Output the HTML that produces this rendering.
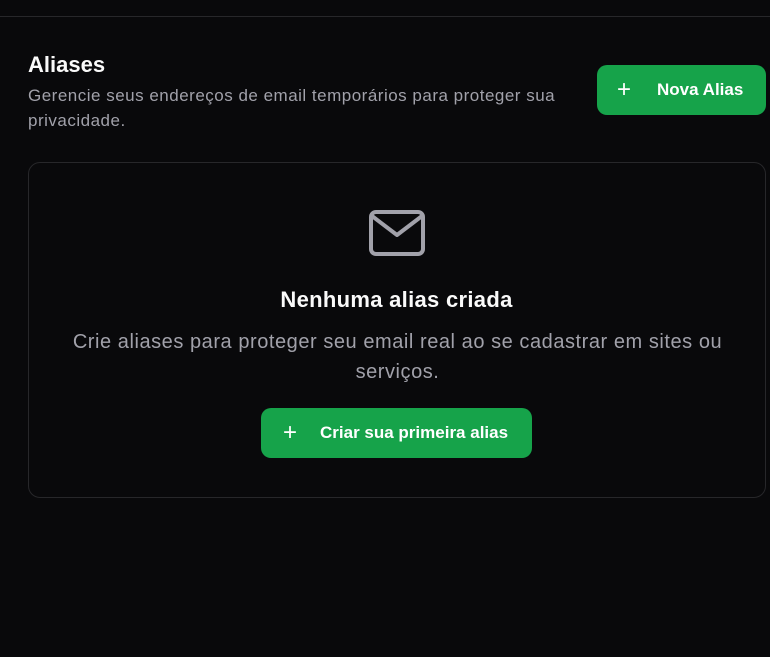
<!DOCTYPE html>
<html><head><style>
body{margin:0;width:770px;height:657px;background:#09090b;font-family:"Liberation Sans",sans-serif;overflow:hidden;position:relative;color:#fafafa}
.line{position:absolute;left:0;top:16px;width:770px;height:1px;background:#27272a}
h1{position:absolute;left:28px;top:52px;margin:0;font-size:22px;font-weight:bold}
.sub{position:absolute;left:28px;top:83px;width:560px;font-size:17px;letter-spacing:0.5px;line-height:25px;color:#a1a1aa}
.btn{position:absolute;background:#16a34a;color:#fff;border-radius:10px;font-weight:bold;font-size:17px;display:flex;align-items:center;box-sizing:border-box}
.btn span.p{font-weight:normal;font-size:24px;line-height:1;display:inline-block}
.card{position:absolute;left:28px;top:162px;width:738px;height:336px;border:1px solid #27272a;border-radius:12px;box-sizing:border-box}
h2{position:absolute;left:0;width:793px;top:287px;margin:0;text-align:center;font-size:22px;font-weight:bold;letter-spacing:0.3px}
.desc{position:absolute;left:60px;width:675px;top:327px;text-align:center;font-size:20px;letter-spacing:0.55px;line-height:30px;color:#a1a1aa}
</style></head><body>
<div class="line"></div>
<h1>Aliases</h1>
<div class="sub">Gerencie seus endereços de email temporários para proteger sua privacidade.</div>
<div class="btn" style="left:597px;top:65px;width:169px;height:50px;padding-left:20px"><span class="p" style="width:40px">+</span>Nova Alias</div>
<div class="card"></div>
<svg style="position:absolute;left:369px;top:210px" width="56" height="46" viewBox="0 0 56 46"><rect x="2" y="2" width="52" height="42" rx="5" fill="none" stroke="#a1a1aa" stroke-width="4"/><path d="M3 6 L28 25 L53 6" fill="none" stroke="#a1a1aa" stroke-width="4" stroke-linejoin="round"/></svg>
<h2>Nenhuma alias criada</h2>
<div class="desc">Crie aliases para proteger seu email real ao se cadastrar em sites ou serviços.</div>
<div class="btn" style="left:261px;top:408px;width:271px;height:50px;padding-left:22px"><span class="p" style="width:37px">+</span>Criar sua primeira alias</div>
</body></html>
